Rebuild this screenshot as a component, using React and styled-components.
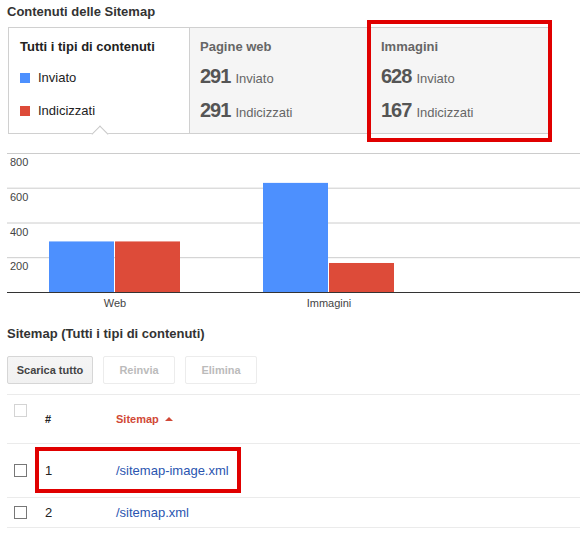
import React from "react";
import styled, { createGlobalStyle } from "styled-components";

const GlobalStyle = createGlobalStyle`
  body {
    margin: 0;
    background: #fff;
    font-family: "Liberation Sans", Arial, sans-serif;
    color: #222;
  }
`;

const Page = styled.div`
  width: 580px;
  padding-left: 7px;
  box-sizing: border-box;
`;

const SectionTitle = styled.h2`
  margin: ${props => props.top}px 0 0 0;
  font-size: 13px;
  line-height: 16px;
  font-weight: bold;
  color: #333;
`;

const TabBox = styled.div`
  display: flex;
  width: 541px;
  height: 107px;
  margin: 7px 0 0 1px;
  box-sizing: border-box;
  border-top: 1px solid #d0d0d0;
  border-bottom: 1px solid #d0d0d0;
`;

const Tab = styled.div`
  position: relative;
  width: ${props => props.width}px;
  box-sizing: border-box;
  padding: 9px 0 0 ${props => props.indent}px;
  background: ${props => (props.active ? "#fff" : "#f5f5f5")};
  border-left: ${props => (props.active ? "1px solid #d0d0d0" : "none")};
  border-right: ${props => (props.active ? "1px solid #d0d0d0" : "none")};

  ${props =>
    props.active &&
    `
    &::after {
      content: "";
      position: absolute;
      left: 85px;
      bottom: -7px;
      width: 11px;
      height: 11px;
      background: #fff;
      border-top: 1px solid #c8c8c8;
      border-left: 1px solid #c8c8c8;
      transform: rotate(45deg);
    }
  `}
`;

const TabHeading = styled.div`
  font-size: 13px;
  line-height: 20px;
  font-weight: bold;
  color: ${props => (props.active ? "#222" : "#666")};
  margin-bottom: 4px;
`;

const TabRow = styled.div`
  display: flex;
  align-items: center;
  height: 33px;
  font-size: 13px;
  color: ${props => (props.active ? "#222" : "#666")};
`;

const StatRow = styled.div`
  display: flex;
  align-items: baseline;
  height: 34px;
  padding-top: 4px;
  box-sizing: border-box;
  font-size: 13px;
  color: #666;
`;

const Count = styled.span`
  font-size: 20px;
  font-weight: bold;
  letter-spacing: -1px;
  color: #555;
  margin-right: 5px;
`;

const Swatch = styled.span`
  width: 10px;
  height: 10px;
  margin-right: 8px;
  background: ${props => props.color};
`;

const Highlight = styled.div`
  position: absolute;
  top: ${props => props.top}px;
  left: ${props => props.left}px;
  width: ${props => props.width}px;
  height: ${props => props.height}px;
  box-sizing: border-box;
  border: 4px solid #e00000;
  pointer-events: none;
`;

const Chart = styled.svg`
  display: block;
  margin: 6px 0 0 -7px;
  font-family: "Liberation Sans", Arial, sans-serif;
`;

const Toolbar = styled.div`
  display: flex;
  gap: 10px;
  margin-top: 14px;
`;

const Button = styled.button`
  height: 28px;
  padding: 0;
  width: ${props => props.width}px;
  box-sizing: border-box;
  border-radius: 2px;
  font-family: inherit;
  font-size: 11px;
  font-weight: bold;
  color: ${props => (props.disabled ? "#bbb" : "#444")};
  background: ${props =>
    props.disabled ? "#fff" : "linear-gradient(#f5f5f5, #f1f1f1)"};
  border: 1px solid ${props => (props.disabled ? "#ececec" : "#d6d6d6")};
`;

const Table = styled.div`
  margin-top: 10px;
  border-bottom: 1px solid #ebebeb;
`;

const Row = styled.div`
  position: relative;
  display: flex;
  align-items: ${props => (props.header ? "flex-start" : "center")};
  height: ${props => props.height}px;
  box-sizing: border-box;
  border-top: 1px solid #ebebeb;
`;

const CheckCell = styled.div`
  width: 38px;
  padding: ${props => (props.header ? "9px" : "0")} 0 0 7px;
  box-sizing: border-box;
`;

const Checkbox = styled.span`
  display: block;
  width: 13px;
  height: 13px;
  box-sizing: border-box;
  border: 1px solid ${props => (props.light ? "#d4d4d4" : "#777")};
  background: #fff;
`;

const NumCell = styled.div`
  width: 71px;
  font-size: ${props => (props.header ? "11px" : "13px")};
  font-weight: ${props => (props.header ? "bold" : "normal")};
  color: #222;
  align-self: center;
`;

const SortHeader = styled.div`
  align-self: center;
  display: flex;
  align-items: center;
  font-size: 11px;
  font-weight: bold;
  color: #d14836;
`;

const SortArrow = styled.span`
  margin-left: 6px;
  width: 0;
  height: 0;
  border-left: 4px solid transparent;
  border-right: 4px solid transparent;
  border-bottom: 4px solid #d14836;
`;

const Link = styled.a`
  font-size: 13px;
  color: #2a55b0;
  text-decoration: none;
`;

const gridY = [13, 47.7, 82.5, 117.2];
const axisLabels = ["800", "600", "400", "200"];
const base = 152;
const scale = 139 / 800;

const bars = [
  { x: 49, v: 291, color: "#4d90fe" },
  { x: 115, v: 291, color: "#dd4b39" },
  { x: 263, v: 628, color: "#4d90fe" },
  { x: 329, v: 167, color: "#dd4b39" },
];

const BarChart = () => (
  <Chart width="580" height="175">
    {gridY.map((y, i) => (
      <g key={y}>
        <line x1="7" x2="580" y1={y + 0.5} y2={y + 0.5} stroke="#cccccc" />
        <text x="10" y={y + 13} fontSize="11" fill="#444">
          {axisLabels[i]}
        </text>
      </g>
    ))}
    {bars.map(b => (
      <rect
        key={b.x}
        x={b.x}
        y={base - b.v * scale}
        width="65"
        height={b.v * scale}
        fill={b.color}
      />
    ))}
    <line x1="7" x2="580" y1={base + 0.5} y2={base + 0.5} stroke="#333" />
    <text x="115" y="167" fontSize="11" fill="#444" textAnchor="middle">
      Web
    </text>
    <text x="329" y="167" fontSize="11" fill="#444" textAnchor="middle">
      Immagini
    </text>
  </Chart>
);

const App = () => {
  return (
    <Page>
      <GlobalStyle />
      <SectionTitle top={4}>Contenuti delle Sitemap</SectionTitle>
      <TabBox>
        <Tab width={182} indent={11} active>
          <TabHeading active>Tutti i tipi di contenuti</TabHeading>
          <TabRow active>
            <Swatch color="#4d90fe" />
            Inviato
          </TabRow>
          <TabRow active>
            <Swatch color="#dd4b39" />
            Indicizzati
          </TabRow>
        </Tab>
        <Tab width={178} indent={10}>
          <TabHeading>Pagine web</TabHeading>
          <StatRow>
            <Count>291</Count>Inviato
          </StatRow>
          <StatRow>
            <Count>291</Count>Indicizzati
          </StatRow>
        </Tab>
        <Tab width={181} indent={13}>
          <TabHeading>Immagini</TabHeading>
          <StatRow>
            <Count>628</Count>Inviato
          </StatRow>
          <StatRow>
            <Count>167</Count>Indicizzati
          </StatRow>
          <Highlight top={-8} left={-1} width={185} height={122} />
        </Tab>
      </TabBox>

      <BarChart />

      <SectionTitle top={11}>Sitemap (Tutti i tipi di contenuti)</SectionTitle>
      <Toolbar>
        <Button width={86}>Scarica tutto</Button>
        <Button width={72} disabled>
          Reinvia
        </Button>
        <Button width={72} disabled>
          Elimina
        </Button>
      </Toolbar>

      <Table>
        <Row header height={49}>
          <CheckCell header>
            <Checkbox light />
          </CheckCell>
          <NumCell header>#</NumCell>
          <SortHeader>
            Sitemap
            <SortArrow />
          </SortHeader>
        </Row>
        <Row height={54}>
          <CheckCell>
            <Checkbox />
          </CheckCell>
          <NumCell>1</NumCell>
          <Link href="#">/sitemap-image.xml</Link>
          <Highlight top={3} left={28} width={206} height={46} />
        </Row>
        <Row height={30}>
          <CheckCell>
            <Checkbox />
          </CheckCell>
          <NumCell>2</NumCell>
          <Link href="#">/sitemap.xml</Link>
        </Row>
      </Table>
    </Page>
  );
};

export default App;
